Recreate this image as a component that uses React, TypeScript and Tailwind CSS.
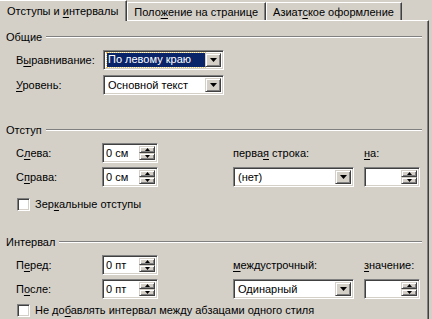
const sunken =
  'border border-t-[#808080] border-l-[#808080] border-b-white border-r-white shadow-[inset_1px_1px_0_#404040,inset_-1px_-1px_0_#d4d0c8]';
const raised =
  'border border-t-[#d4d0c8] border-l-[#d4d0c8] border-b-[#404040] border-r-[#404040] shadow-[inset_1px_1px_0_#ffffff,inset_-1px_-1px_0_#808080]';

const U = ({ children }: { children: string }) => <span className="underline underline-offset-[2px]">{children}</span>;

const Header = ({ label }: { label: string }) => (
  <div className="flex items-center h-[14px] pl-[6px] pr-[6px]">
    <span className="pr-[4px]">{label}</span>
    <div className="flex-1 border-t border-t-[#808080] border-b border-b-white" />
  </div>
);

const Combo = ({ text, selected, width }: { text: string; selected?: boolean; width: string }) => (
  <div className={`${sunken} ${width} h-[20px] bg-white flex items-stretch p-[2px] shrink-0`}>
    <div className="flex-1 flex items-center min-w-0 pl-[1px]">
      {selected ? (
        <span className="bg-[#0a246a] text-white w-full h-[14px] leading-[13px] px-[1px] outline outline-1 outline-dotted outline-[#f0c060]">
          {text}
        </span>
      ) : (
        <span className="pl-[1px] leading-[14px]">{text}</span>
      )}
    </div>
    <div className={`${raised} w-[16px] bg-[#d4d0c8] flex items-center justify-center`}>
      <svg width="7" height="4" viewBox="0 0 7 4">
        <path d="M0 0h7L3.5 4z" fill="#000" />
      </svg>
    </div>
  </div>
);

const Spin = ({ text }: { text: string }) => (
  <div className={`${sunken} w-[56px] h-[20px] bg-white flex items-stretch p-[2px] shrink-0`}>
    <div className="flex-1 flex items-center pl-[1px] leading-[14px]">{text}</div>
    <div className="w-[16px] flex flex-col">
      <div className={`${raised} flex-1 bg-[#d4d0c8] flex items-center justify-center`}>
        <svg width="5" height="3" viewBox="0 0 5 3">
          <path d="M2.5 0L5 3H0z" fill="#000" />
        </svg>
      </div>
      <div className={`${raised} flex-1 bg-[#d4d0c8] flex items-center justify-center`}>
        <svg width="5" height="3" viewBox="0 0 5 3">
          <path d="M0 0h5L2.5 3z" fill="#000" />
        </svg>
      </div>
    </div>
  </div>
);

const Check = ({ children }: { children: React.ReactNode }) => (
  <div className="flex items-center h-[14px] pl-[17px]">
    <div className={`${sunken} w-[13px] h-[13px] bg-white`} />
    <span className="pl-[5px] whitespace-nowrap">{children}</span>
  </div>
);

const Tab = ({ children, active }: { children: React.ReactNode; active?: boolean }) =>
  active ? (
    <div className="relative z-10 h-[21px] -mb-[1px] bg-[#d4d0c8] border-t border-t-white border-r border-r-[#404040] shadow-[inset_-1px_0_0_#808080] pl-[7px] pr-[8px] flex items-center">
      <span className="whitespace-nowrap">{children}</span>
    </div>
  ) : (
    <div className="h-[18px] mt-[2px] bg-[#d4d0c8] border-t border-l border-t-white border-l-white border-r border-r-[#404040] shadow-[inset_-1px_0_0_#808080] pl-[6px] pr-[7px] flex items-center">
      <span className="whitespace-nowrap">{children}</span>
    </div>
  );

export default function App() {
  return (
    <div
      className="w-[432px] h-[319px] overflow-hidden bg-[#d4d0c8] text-black text-[11px] leading-[14px]"
      style={{ fontFamily: '"Liberation Sans", Arial, sans-serif' }}
    >
      <div className="flex items-start h-[20px]">
        <Tab active>
          Отступы и <U>и</U>нтервалы
        </Tab>
        <Tab>
          Поло<U>ж</U>ение на странице
        </Tab>
        <Tab>
          Азиат<U>с</U>кое оформление
        </Tab>
      </div>
      <div className="w-[429px] h-[299px] border-t border-t-white border-r border-r-[#404040] shadow-[inset_-1px_0_0_#808080] pt-[9px]">
        <Header label="Общие" />
        <div className="flex items-center h-[20px] mt-[6px] pl-[16px]">
          <div className="w-[87px] shrink-0">
            В<U>ы</U>равнивание:
          </div>
          <Combo text="По левому краю" selected width="w-[121px]" />
        </div>
        <div className="flex items-center h-[20px] mt-[5px] pl-[16px]">
          <div className="w-[87px] shrink-0">
            <U>У</U>ровень:
          </div>
          <Combo text="Основной текст" width="w-[121px]" />
        </div>

        <div className="mt-[28px]">
          <Header label="Отступ" />
        </div>
        <div className="flex items-center h-[20px] mt-[6px] pl-[16px]">
          <div className="w-[86px] shrink-0">
            С<U>л</U>ева:
          </div>
          <Spin text="0 см" />
          <div className="w-[75px] shrink-0" />
          <div className="w-[131px] shrink-0 whitespace-nowrap">
            перва<U>я</U> строка:
          </div>
          <div className="whitespace-nowrap">
            <U>н</U>а:
          </div>
        </div>
        <div className="flex items-center h-[20px] mt-[4px] pl-[16px]">
          <div className="w-[86px] shrink-0">
            С<U>п</U>рава:
          </div>
          <Spin text="0 см" />
          <div className="w-[75px] shrink-0" />
          <Combo text="(нет)" width="w-[121px]" />
          <div className="w-[10px] shrink-0" />
          <Spin text="" />
        </div>
        <div className="mt-[10px]">
          <Check>
            Зер<U>к</U>альные отступы
          </Check>
        </div>

        <div className="mt-[24px]">
          <Header label="Интервал" />
        </div>
        <div className="flex items-center h-[20px] mt-[6px] pl-[16px]">
          <div className="w-[86px] shrink-0">
            П<U>е</U>ред:
          </div>
          <Spin text="0 пт" />
          <div className="w-[75px] shrink-0" />
          <div className="w-[131px] shrink-0 whitespace-nowrap">
            <U>м</U>еждустрочный:
          </div>
          <div className="whitespace-nowrap">
            <U>з</U>начение:
          </div>
        </div>
        <div className="flex items-center h-[20px] mt-[4px] pl-[16px]">
          <div className="w-[86px] shrink-0">
            П<U>о</U>сле:
          </div>
          <Spin text="0 пт" />
          <div className="w-[75px] shrink-0" />
          <Combo text="Одинарный" width="w-[121px]" />
          <div className="w-[10px] shrink-0" />
          <Spin text="" />
        </div>
        <div className="mt-[4px]">
          <Check>
            Не до<U>б</U>авлять интервал между абзацами одного стиля
          </Check>
        </div>
      </div>
    </div>
  );
}
